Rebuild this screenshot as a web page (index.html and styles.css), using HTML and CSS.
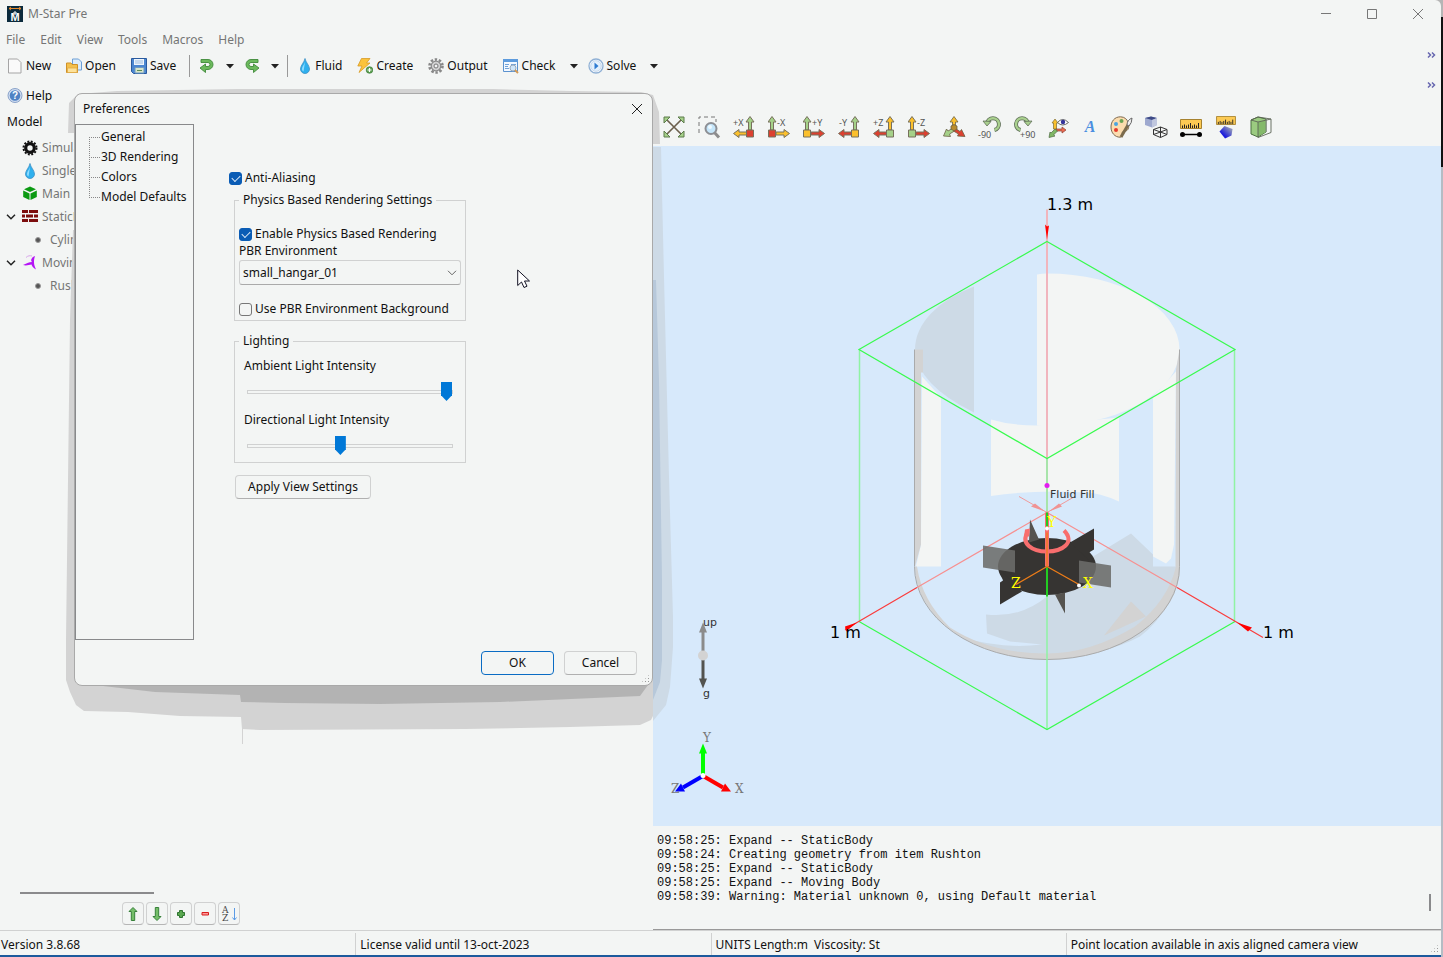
FILE: index.html
```
<!DOCTYPE html>
<html lang="en">
  <head>
    <meta charset="UTF-8">
    <meta name="viewport" content="width=device-width, initial-scale=1">
    <title>M-Star Pre</title>
    <link rel="stylesheet" href="styles.css">
  </head>
  <body>
    <!-- shared icon shapes -->
    <svg class="defs" aria-hidden="true">
      <symbol id="drop" viewBox="0 0 16 16">
        <path d="M8 .5C7.500 4 3.500 7.500 3.500 11a4.500 4.500 0 0 0 9 0C12.500 7.500 8.500 4 8 .5z" fill="#2fb0ee" stroke="#3c8fc4" stroke-width=".8" />
        <path d="M8 4c-1 3-3 4.500-3 7 0 1 .5 2 1.500 2.500z" fill="#8fdcff" />
      </symbol>
      <symbol id="caret" viewBox="0 0 8 5"><path d="M0 0h8L4 4.500z" fill="#222" /></symbol>
      <symbol id="more" viewBox="0 0 9 6"><path d="M1 .5 3.500 3 1 5.500M5 .5 7.500 3 5 5.500" fill="none" stroke="#6767b0" stroke-width="1.500" /></symbol>
      <symbol id="back" viewBox="0 0 16 16">
        <path d="M2 1.500h7a5 5 0 0 1 0 10H6.500v3L1 10l5.500-4v2.500H9a2 2 0 0 0 0-4H2z" fill="#6cb95d" stroke="#3f8a3a" stroke-width=".9" />
      </symbol>
      <symbol id="axis-left" viewBox="0 0 22 22">
        <path d="M15.500 14V6H13l4-5.500L21 6h-2.500v8z" class="up" />
        <path d="M14 16H6v-2.500L.5 17.500l5.500 4V19h8z" class="side" />
        <path d="M13.500 14h7v7h-7z" class="hub" />
      </symbol>
      <symbol id="axis-right" viewBox="0 0 22 22">
        <path d="M2.500 14V6H0l4-5.500L8 6H5.500v8z" class="up" />
        <path d="M8 16h8v-2.500l5.500 4-5.500 4V19H8z" class="side" />
        <path d="M.5 14h7v7h-7z" class="hub" />
      </symbol>
      <symbol id="turn" viewBox="0 0 22 22">
        <path d="M6 8.500a6 6 0 1 1 7.500 6.500" fill="none" stroke="#5f6f58" stroke-width="4" />
        <path d="M6 8.500a6 6 0 1 1 7.500 6.500" fill="none" stroke="#a9d08e" stroke-width="2.400" />
        <path d="m2 6 8 .5-4 4.500z" fill="#a9d08e" stroke="#5f6f58" stroke-width=".8" />
      </symbol>
      <symbol id="ruler" viewBox="0 0 22 10">
        <path d="M.5.5h21v9H.5z" fill="#fcca53" stroke="#a6822f" />
        <path d="M2.500 9V6.500m2 2.500V5.500m2 3.500V6.500m2 2.500V5.500m2 3.500V4m2 5V6.500m2 2.500V5.500m2 3.500V6.500m2 2.500V4" stroke="#222" />
      </symbol>
      <symbol id="expand" viewBox="0 0 10 6"><path d="M1 .8 5 4.800 9 .8" fill="none" stroke="#222" stroke-width="1.500" /></symbol>
      <symbol id="arrow" viewBox="0 0 16 16"><path d="M6.300 14.500V5.500H4L8 1.500l4 4H9.700v9z" fill="#74be68" stroke="#37803a" /></symbol>
    </svg>

    <div class="window">
      <header class="titlebar">
        <svg class="logo" viewBox="0 0 16 16">
          <path d="M0 0h16v16H0z" fill="#0b2a3c" />
          <path d="M2 2.500h12M4 1 2 2.500 4 4m8-3 2 1.500L12 4" fill="none" stroke="#e58a2e" />
          <path d="M8 5v4M6 7h4" stroke="#fff" />
          <text x="8" y="15" class="logo-text">M</text>
        </svg>
        <h1>M-Star Pre</h1>
        <div class="window-buttons">
          <button aria-label="Minimize"><svg viewBox="0 0 12 12"><path d="M1 5.500h10" /></svg></button>
          <button aria-label="Maximize"><svg viewBox="0 0 12 12"><path d="M1.500 1.500h9v9h-9z" /></svg></button>
          <button aria-label="Close"><svg viewBox="0 0 12 12"><path d="m1 1 10 10M11 1 1 11" /></svg></button>
        </div>
      </header>

      <nav class="menubar">
        <button>File</button>
        <button>Edit</button>
        <button>View</button>
        <button>Tools</button>
        <button>Macros</button>
        <button>Help</button>
      </nav>

      <div class="toolbar">
        <button class="tool">
          <svg viewBox="0 0 16 16"><path d="M1.500 1h9l3.500 3.500V15H1.500z" fill="#fafafa" stroke="#a5a5a5" /></svg>
          New
        </button>
        <button class="tool">
          <svg viewBox="0 0 16 16">
            <path d="M6.500 1h6l3 3v8h-9z" fill="#dcecfb" stroke="#6c9fd6" />
            <path d="M.5 5H5l1 1.500h5.500v8H.5z" fill="#f4c04c" stroke="#cf9128" />
            <path d="M1.500 10H11v4.500H1.500z" fill="#fde29a" stroke="#e0aa44" stroke-width=".8" />
          </svg>
          Open
        </button>
        <button class="tool">
          <svg viewBox="0 0 16 16">
            <path d="M.5.5h15v15h-13l-2-2z" fill="#4b87d1" stroke="#2a5a9e" />
            <path d="M3 1h10v6H3z" fill="#eef5fc" />
            <path d="M4 3h8M4 5h8" stroke="#9dbde0" />
            <path d="M4 9.500h9V15H4z" fill="#d8e5c9" stroke="#6f9ac5" />
            <path d="M6 12.500h5" stroke="#5c8b55" />
          </svg>
          Save
        </button>
        <span class="separator"></span>
        <button class="tool" aria-label="Undo"><svg><use href="#back" /></svg></button>
        <button class="drop" aria-label="Undo list"><svg><use href="#caret" /></svg></button>
        <button class="tool" aria-label="Redo"><svg class="flip"><use href="#back" /></svg></button>
        <button class="drop" aria-label="Redo list"><svg><use href="#caret" /></svg></button>
        <span class="separator"></span>
        <button class="tool tool-narrow"><svg><use href="#drop" /></svg>Fluid</button>
        <button class="tool">
          <svg viewBox="0 0 16 16">
            <path d="M4.500.5H13L9.500 5H13L2 14.500l3-6.500H.8z" fill="#fbc33b" stroke="#d79a26" stroke-width=".8" />
            <circle cx="12.500" cy="12" r="3.300" fill="#5da052" stroke="#3b7c36" stroke-width=".7" />
            <path d="M12.500 10v4m-2-2h4" stroke="#fff" stroke-width="1.200" />
          </svg>
          Create
        </button>
        <button class="tool">
          <svg viewBox="0 0 16 16">
            <circle cx="8" cy="8" r="6.500" fill="none" stroke="#888" stroke-width="2.600" stroke-dasharray="2.400 1.684" />
            <circle cx="8" cy="8" r="4.800" fill="#d2d2d2" stroke="#888" stroke-width="1.200" />
            <circle cx="8" cy="8" r="2" fill="#f3f4f4" stroke="#777" />
          </svg>
          Output
        </button>
        <button class="tool tool-menu">
          <svg viewBox="0 0 16 16">
            <path d="M.5 1.500h14v12H.5z" fill="#f2f8ff" stroke="#5b92cf" />
            <path d="M0 1h15v3H0z" fill="#5d9bdd" />
            <path d="M2 6.500h4m-4 2h3m-3 2h4m2-4h5" stroke="#71a2d8" />
            <circle cx="10" cy="10" r="3" fill="#cfe6fa" stroke="#9aaaba" />
            <path d="m12 12 3 3" stroke="#d29a56" stroke-width="2" />
          </svg>
          Check
        </button>
        <button class="drop" aria-label="Check list"><svg><use href="#caret" /></svg></button>
        <button class="tool tool-menu">
          <svg viewBox="0 0 16 16">
            <circle cx="8" cy="8" r="7" fill="#fff" stroke="#8fb0d5" stroke-width="1.300" />
            <circle cx="8" cy="8" r="5.300" fill="#e3f0fc" stroke="#c5d8ed" />
            <path d="M6.500 4.500 10.500 8l-4 3.500z" fill="#2e7bd1" />
          </svg>
          Solve
        </button>
        <button class="drop" aria-label="Solve list"><svg><use href="#caret" /></svg></button>
        <button class="more" aria-label="More tools"><svg><use href="#more" /></svg></button>
      </div>

      <div class="toolbar">
        <button class="tool">
          <svg viewBox="0 0 16 16">
            <circle cx="8" cy="7.500" r="7" fill="#cfdcf0" stroke="#8aa3c9" />
            <circle cx="8" cy="7.500" r="5.300" fill="#4f82c4" />
            <text x="8" y="11" class="help-text">?</text>
          </svg>
          Help
        </button>
        <button class="more" aria-label="More tools"><svg><use href="#more" /></svg></button>
      </div>

      <main class="main">
        <section class="model">
          <h2>Model</h2>
          <ul class="tree">
            <li>
              <svg class="tree-icon" viewBox="0 0 16 16">
                <circle cx="8" cy="8" r="6.500" fill="none" stroke="#111" stroke-width="2" stroke-dasharray="1.900 1.503" />
                <circle cx="8" cy="8" r="4.300" fill="none" stroke="#111" stroke-width="3.200" />
              </svg>Simulation
            </li>
            <li><svg class="tree-icon"><use href="#drop" /></svg>Single Fluid</li>
            <li>
              <svg class="tree-icon" viewBox="0 0 16 16">
                <path d="m8 .5 6 2.700-6 2.800-6-2.800z" fill="#0b9a12" />
                <path d="M1.200 4.500 7.500 7.500V14l-6.300-3zM14.800 4.500 8.500 7.500V14l6.300-3z" fill="#0b9a12" />
              </svg>Main
            </li>
            <li class="parent">
              <button aria-label="Collapse StaticBody"><svg><use href="#expand" /></svg></button>
              <svg class="tree-icon" viewBox="0 0 16 16">
                <path d="M0 1h6v3H0zm7 0h9v3H7zM0 5.500h3v3H0zm4 0h7v3H4zm8 0h4v3h-4zM0 10h6v3H0zm7 0h9v3H7z" fill="#7c0d0d" />
              </svg>StaticBody
            </li>
            <li class="child"><i></i>Cylinder</li>
            <li class="parent">
              <button aria-label="Collapse Moving Body"><svg><use href="#expand" /></svg></button>
              <svg class="tree-icon" viewBox="0 0 16 16">
                <path d="M10 7C8 5 10 2 13 1c-1 3-1 4-1 6.500 0 2.500 1 4.500 2 7-3-1.500-4-3.500-4.500-5C7 10 4 11 1 10 4 8.500 7 7 10 7z" fill="#b414f5" />
                <path d="M4 2.500C6 .5 8 .5 10 1" fill="none" stroke="#d7a6ea" />
              </svg>Moving Body
            </li>
            <li class="child"><i></i>Rushton</li>
          </ul>
          <div class="model-scroll"></div>
          <div class="model-buttons">
            <button aria-label="Move up"><svg><use href="#arrow" /></svg></button>
            <button aria-label="Move down"><svg class="down"><use href="#arrow" /></svg></button>
            <button aria-label="Add"><svg viewBox="0 0 16 16"><path d="M6.500 4.500h3v2h2v3h-2v2h-3v-2h-2v-3h2z" fill="#5aa850" stroke="#2f7430" /></svg></button>
            <button aria-label="Remove"><svg viewBox="0 0 16 16"><path d="M5 6.500h6.500v2.500H5z" fill="#f99" stroke="#d81e1e" /></svg></button>
            <button aria-label="Sort">
              <svg viewBox="0 0 16 16">
                <text x="1" y="7" class="sort-text">A</text>
                <text x="1" y="15" class="sort-text">Z</text>
                <path d="M13.500 2v12m-2-2.500 2 2.500 2-2.500" fill="none" stroke="#5b9be6" />
              </svg>
            </button>
          </div>
        </section>

        <section class="view">
          <div class="view-tools">
            <button aria-label="Fit view">
              <svg viewBox="0 0 22 22">
                <path d="m4 4 14 14M18 4 4 18" stroke="#6b5f4c" stroke-width="1.600" />
                <path d="M1 1h6L1 7zM21 1v6l-6-6zM1 21v-6l6 6zM21 21h-6l6-6z" fill="#a5d189" stroke="#5c7a4c" />
              </svg>
            </button>
            <button aria-label="Zoom to region">
              <svg viewBox="0 0 22 22">
                <path d="M1 17V1h17v5" fill="none" stroke="#777" stroke-dasharray="4 3" />
                <path d="m16 16 5 5.500" stroke="#8d8d8d" stroke-width="3" />
                <circle cx="13" cy="12.500" r="5.500" fill="#c5e6fa" stroke="#8d8f94" stroke-width="2" />
                <circle cx="12" cy="11" r="2" fill="#eefaff" />
              </svg>
            </button>
            <button class="axis axis-x" aria-label="Plus X"><svg viewBox="0 0 22 22"><use href="#axis-left" /><text x="0" y="10">+X</text></svg></button>
            <button class="axis axis-x" aria-label="Minus X"><svg viewBox="0 0 22 22"><use href="#axis-right" /><text x="9" y="10">-X</text></svg></button>
            <button class="axis axis-y" aria-label="Plus Y"><svg viewBox="0 0 22 22"><use href="#axis-right" /><text x="9" y="10">+Y</text></svg></button>
            <button class="axis axis-y" aria-label="Minus Y"><svg viewBox="0 0 22 22"><use href="#axis-left" /><text x="1" y="10">-Y</text></svg></button>
            <button class="axis axis-z" aria-label="Plus Z"><svg viewBox="0 0 22 22"><use href="#axis-left" /><text x="0" y="10">+Z</text></svg></button>
            <button class="axis axis-z" aria-label="Minus Z"><svg viewBox="0 0 22 22"><use href="#axis-right" /><text x="9" y="10">-Z</text></svg></button>
            <button aria-label="Isometric">
              <svg viewBox="0 0 22 22" stroke="#6b6145" stroke-width=".8">
                <path d="M9.500 11V6H7l4-5.500L15 6h-2.500v5z" fill="#fbc02d" />
                <path d="m10 12-5 3-1.500-2L.5 20l7 .5-1-2.500 5-3z" fill="#a5d189" />
                <path d="m12 12 5 3.500 1.500-2L22 20.500l-7.500-.5 1-2-5-3z" fill="#dc4030" />
                <path d="m8 10 3-1.500L14 10v3l-3 2-3-2z" fill="#b98b2c" />
              </svg>
            </button>
            <button aria-label="Rotate minus 90"><svg viewBox="0 0 22 22"><use href="#turn" x="3" y="-1" width="22" height="22" /><text x="0" y="22">-90</text></svg></button>
            <button aria-label="Rotate plus 90"><svg viewBox="0 0 22 22"><use href="#turn" class="mirror" x="1" y="-1" width="22" height="22" /><text x="7" y="22">+90</text></svg></button>
            <button aria-label="Show axes">
              <svg viewBox="0 0 22 22">
                <path d="M5.500 13V7H4l3-4 3 4H8.500v6z" fill="#fbc02d" stroke="#7c6b32" stroke-width=".7" />
                <path d="M8 13h6v-2l4 3-4 3v-2H8z" fill="#ec6a50" stroke="#8c3f30" stroke-width=".7" />
                <path d="m7 13-4 4-1-1-1 5.500 6-1.500-1.500-1 4-4z" fill="#7fb765" stroke="#4f6c42" stroke-width=".7" />
                <path d="M9.500 6.500q5-6 11 0-6 5-11 0z" fill="#fff" stroke="#666" />
                <circle cx="15" cy="6" r="2.200" fill="#34349a" />
              </svg>
            </button>
            <button class="letter" aria-label="Annotations">A</button>
            <button aria-label="Colors">
              <svg viewBox="0 0 22 22">
                <path d="M10.500.8C4.500.8 1 5.500 1 11c0 6 4 10.200 9 10.200 2.500 0 2.500-2 2.200-3.700-.2-2 1-2.500 3-2.500C21 15 20 .8 10.500.8z" fill="#fbdcae" stroke="#7e6a50" />
                <circle cx="6" cy="8" r="2" fill="#4aa5df" /><circle cx="11.500" cy="5" r="2" fill="#69a354" />
                <circle cx="6" cy="14" r="2" fill="#e5392c" />
                <path d="M18 9 11 21" stroke="#7b6b4c" stroke-width="3" />
                <path d="M17 9q0-5 5-7 0 5-3 8z" fill="#eee" stroke="#666" />
              </svg>
            </button>
            <button aria-label="Solid or wireframe">
              <svg viewBox="0 0 22 22">
                <path d="m0 2 6-1.500L12 2v7l-5 2.500L0 9z" fill="#9ea9cf" />
                <path d="m0 2 6-1.500L12 2 7 4z" fill="#3d4a86" /><path d="M7 4v7.500L12 9V2z" fill="#c0c7de" />
                <path d="m8.500 13.500 7-2.500 6.500 2.500v5l-6.500 3-7-3zl7 2.500 6.500-2.500m-6.500 2.500v5.500m0-10.500v5m-7 2.500 7-2.500 6.500 2.500" fill="none" stroke="#333" />
              </svg>
            </button>
            <button aria-label="Measure distance">
              <svg viewBox="0 0 22 22"><use href="#ruler" y="3" width="22" height="10" /><path d="M3 18.500h16" stroke="#000" stroke-width="1.500" /><circle cx="2.500" cy="18.500" r="2.500" /><circle cx="19.500" cy="18.500" r="2.500" /></svg>
            </button>
            <button aria-label="Measure geometry">
              <svg viewBox="0 0 22 22">
                <defs><linearGradient id="gem" x1="1" y1="0" x2="0" y2="1"><stop offset=".2" stop-color="#8c93bb" /><stop offset=".7" stop-color="#1c1cdc" /></linearGradient></defs>
                <use href="#ruler" width="22" height="9" /><path d="m9.500 10 8 3-1 6.500-6.500 3-5.500-7z" fill="url(#gem)" />
              </svg>
            </button>
            <button aria-label="Clip">
              <svg viewBox="0 0 22 22">
                <path d="m1 4 7-3 8 2v13l-8 5-7-3z" fill="#9bcb80" stroke="#4b7040" />
                <path d="M8 6.500 16 4v12l-8 4.500z" fill="#84b96a" />
                <path d="m1 4 7-3 13 2v13.500L8 21.500V6zm7 2 13-3" fill="none" stroke="#5c6455" stroke-width=".9" />
                <path d="M16 3v13" stroke="#777" stroke-width=".7" />
              </svg>
            </button>
          </div>

          <svg class="scene" viewBox="653 147 788 679" role="img" aria-label="Mixing tank">
            <!-- tank -->
            <path d="M974 287A132.500 76 0 0 0 915 350q2 35 59 63z" fill="#cddae6" />
            <g fill="#f3f5f4">
              <path d="M1037 275q5-1 10-1a132.500 76 0 0 1 132.500 76A132.500 76 0 0 1 1037 426z" />
              <path d="M991 420q20 6 46 6l82-8v84q-20-9-34-9-50-3-94 3.500z" />
              <path d="m922 377 19 21v169h-25l5-22z" />
              <path d="m1153 397 23-25-2 173-3 14-5 5-13-7z" />
            </g>
            <path d="m1131 534 22 21v12h25q-3 43-38 70-40 21-93 20-47-2-87-20 40 13 82 8l-32-3-23-8-1-19q34 4 61-18l33-32z" fill="#cddae6" />
            <path d="M915 350h8v23h-2v172l-6 22zM1176 370l3.500-20v217h-4zM915 567a132.500 93 0 0 0 265 0h-4q-8 34-41 60-45 27-88 27-57 0-97-26-28-27-33-61z" fill="#d3d3d3" />
            <path d="m1131 602 15 15-42 19z" fill="#d3d3d3" />
            <path d="M914.500 350v217a132.500 93 0 0 0 265 0V350" fill="none" stroke="#a9aaab" />

            <!-- bounding box and axes -->
            <g fill="none">
              <path d="M1047 210v303" stroke="#f1b5bd" stroke-width="2" />
              <path d="M859.500 350v272M1234.500 350v272M1047 459v271" stroke="#8ff3a4" stroke-width="1.500" />
              <path d="m1047 242 188 108-188 109-188-109zM859 622l188 108 188-108" stroke="#38fb4d" stroke-width="1.200" />
              <path d="m1047 513-130 75M1047 513l130 75" stroke="#f79090" stroke-width="1.200" />
              <path d="m917 588-72 42M1177 588l86 50" stroke="#fa3c3c" stroke-width="1.200" />
              <path d="m1019 497 28 16 26-15" stroke="#f09a9a" />
            </g>
            <path d="m1045 225 2 2 2-1-2 14zM857 623l-12 4 1 5zM1237 623l15 5-4 4z" fill="#f00" />
            <path d="m1045 512-14-5 4-3zM1049 512l10-8 3 3z" fill="#f09393" />

            <!-- impeller -->
            <g fill="#363432">
              <ellipse cx="1047" cy="567" rx="49" ry="28.500" />
              <path d="m1070 543 24-14v21l-5 3 7 14zM1000 605v-22l3-2-4-12 23 23z" />
            </g>
            <path d="m983 546 32 5v22l-32-5zM1079 561l32 5v22l-32-5z" fill="#6c6c6a" fill-opacity=".88" />
            <path d="m1030 520 9 20-10 3zM1055 595l10-2v21z" fill="#55534f" />
            <path d="M1028 532c-8 12 4 20 19 20s29-9 17-21" fill="none" stroke="#f86e6e" stroke-width="4" />
            <path d="m1024 537 1-7 5-1-1 8z" fill="#f86e6e" />
            <path d="M1047 513v54" stroke="#f86e6e" stroke-width="4" />
            <path d="M1047 513v14M1047 568v29" stroke="#22cc22" stroke-width="2" />
            <path d="m1047 567-31 18M1047 567l32 18M1047 533v34" fill="none" stroke="#ee7d18" stroke-width="1.300" />
            <circle cx="1047" cy="529" r="2" fill="#fff" /><circle cx="1079" cy="586" r="2" fill="#fff" />
            <circle cx="1047" cy="486" r="2.500" fill="#e31ef0" />
            <g class="axis-name">
              <text x="1047" y="527">Y</text>
              <text x="1011" y="588">Z</text>
              <text x="1083" y="588">X</text>
            </g>
            <g class="size-name">
              <text x="1047" y="210">1.3 m</text>
              <text x="830" y="638">1 m</text>
              <text x="1263" y="638">1 m</text>
            </g>
            <text x="1050" y="498" class="fill-name">Fluid Fill</text>

            <!-- gravity -->
            <path d="M703 655v-24" stroke="#8b8b8b" stroke-width="3" /><path d="M699 633h8l-4-10z" fill="#8b8b8b" />
            <path d="M703 660v20" stroke="#53534f" stroke-width="3" /><path d="M699 679h8l-4 10z" fill="#53534f" />
            <circle cx="703" cy="656" r="5" fill="#d3d3d3" />
            <text x="703" y="626" class="fill-name">up</text>
            <text x="703" y="697" class="fill-name">g</text>

            <!-- orientation -->
            <path d="M703 775v-22" stroke="#0f0" stroke-width="4" /><path d="M699 754h8l-4-10z" fill="#0f0" />
            <path d="m704 777 19 11" stroke="#f00" stroke-width="4" /><path d="m721 792 4-8 6 8z" fill="#f00" />
            <path d="m702 777-19 11" stroke="#00f" stroke-width="4" /><path d="m685 792-4-8-6 8z" fill="#00f" />
            <circle cx="703" cy="776" r="2.500" fill="#fff" />
            <g class="triad-name">
              <text x="703" y="742">Y</text>
              <text x="735" y="793">X</text>
              <text x="671" y="793">Z</text>
            </g>
          </svg>

          <div class="log">
            <p>09:58:25: Expand -- StaticBody</p>
            <p>09:58:24: Creating geometry from item Rushton</p>
            <p>09:58:25: Expand -- StaticBody</p>
            <p>09:58:25: Expand -- Moving Body</p>
            <p>09:58:39: Warning: Material unknown 0, using Default material</p>
            <span class="log-scroll"></span>
          </div>
        </section>
      </main>

      <footer class="status">
        <span>Version 3.8.68</span>
        <span>License valid until 13-oct-2023</span>
        <span>UNITS Length:m&nbsp; Viscosity: St</span>
        <span>Point location available in axis aligned camera view</span>
        <i class="grip"></i>
      </footer>
    </div>

    <svg class="shadow" viewBox="0 0 620 670" aria-hidden="true">
      <!-- starts at 60,80 on the desktop -->
      <g fill="#d3d3d3">
        <path d="m8 53 1-30 9-9 39-3 120-2h256l78 2 70 1 12 3 6 17 1 32h-18V20H14v33zM13 150l-3 90-2 160-2 160v40l4 12 6 13 8 6 44 1 52 4 61 1 1 12 18 1 205-1 105-2 70-2 11-5 2-4v-40H14V150z" />
        <path d="M182 630h1v34h-1z" />
      </g>
      <path d="M593 67h8l3 130 5 200 4 140v30l-3 40-4 18-13 16z" fill="#cddae6" />
      <path d="M593 200h3l3 100 3 200v80l-2 22-7 18z" fill="#b7c8da" />
      <path d="m43 606 52 6 85 3 1 7 44 1 95 1 120-2 140-6 8-11z" fill="#b3b3b3" />
    </svg>

    <section class="dialog" role="dialog" aria-labelledby="dialog-title">
      <header>
        <h2 id="dialog-title">Preferences</h2>
        <button aria-label="Close preferences"><svg viewBox="0 0 12 12"><path d="m1 1 10 10M11 1 1 11" /></svg></button>
      </header>
      <div class="dialog-body">
        <ul class="pages">
          <li>General</li>
          <li>3D Rendering</li>
          <li>Colors</li>
          <li>Model Defaults</li>
        </ul>
        <form class="settings">
          <label class="check"><input type="checkbox" checked>Anti-Aliasing</label>
          <fieldset class="pbr">
            <legend>Physics Based Rendering Settings</legend>
            <label class="check"><input type="checkbox" checked>Enable Physics Based Rendering</label>
            <label for="environment">PBR Environment</label>
            <div class="select">
              <select id="environment"><option>small_hangar_01</option></select>
              <svg viewBox="0 0 10 6"><path d="M1 .8 5 4.800 9 .8" fill="none" stroke="#666" /></svg>
            </div>
            <label class="check"><input type="checkbox">Use PBR Environment Background</label>
          </fieldset>
          <fieldset class="lighting">
            <legend>Lighting</legend>
            <label for="ambient">Ambient Light Intensity</label>
            <input type="range" id="ambient" value="100">
            <label for="directional">Directional Light Intensity</label>
            <input type="range" id="directional" value="45">
          </fieldset>
          <button type="button" class="button apply">Apply View Settings</button>
        </form>
      </div>
      <footer>
        <button class="button default">OK</button>
        <button class="button">Cancel</button>
      </footer>
      <i class="grip"></i>
    </section>

    <svg class="pointer" viewBox="0 0 13 20" aria-hidden="true"><path d="M.7 1v15.500L4.500 13l2.500 5.500 3-1.300L7.500 12h5z" fill="#fff" stroke="#112" /></svg>
  </body>
</html>
```
FILE: styles.css
```
:root {
  --face: #f3f5f4;
  --line: #d0d1d1;
  --text: #111;
  --muted: #757575;
  --sky: #d7e9fb;
  --green: #a5d189;
  --yellow: #fbc02d;
  --red: #dc4030;
}

* {
  box-sizing: border-box;
}
body {
  background: linear-gradient(#b5b5b5 17px, #111 17px, #111 167px, #b5bcc4 167px);
  color: var(--text);
  font: 12px/16px "Noto Sans", "Open Sans", sans-serif;
  height: 100vh;
  margin: 0;
  overflow: hidden;
  position: relative;
}
h1, h2 {
  font-size: inherit;
  font-weight: normal;
  margin: 0;
}
p, ul, form {
  margin: 0;
  padding: 0;
}
ul {
  list-style: none;
}
button {
  align-items: center;
  background: none;
  border: 0;
  color: inherit;
  display: flex;
  font: inherit;
  justify-content: center;
  padding: 0;
}
svg {
  display: block;
  flex: none;
}
.defs {
  height: 0;
  position: absolute;
  width: 0;
}

.window {
  background: var(--face);
  border-bottom: 2px solid #1c5a9c;
  border-radius: 0 6px 0 0;
  display: flex;
  flex-direction: column;
  height: 100%;
  margin-right: 2px;
}

/* title and menu */
.titlebar {
  align-items: center;
  color: var(--muted);
  display: flex;
  gap: 5px;
  height: 27px;
  padding-left: 7px;
}
.logo {
  height: 16px;
  overflow: visible;
  width: 16px;
}
.logo-text {
  fill: #fff;
  font: bold 11px "Liberation Sans", sans-serif;
  text-anchor: middle;
}
.window-buttons {
  display: flex;
  margin-left: auto;
}
.window-buttons button {
  height: 26px;
  width: 46px;
}
.window-buttons svg {
  fill: none;
  height: 12px;
  stroke: #777;
  width: 12px;
}
.menubar {
  align-items: center;
  color: var(--muted);
  display: flex;
  gap: 15px;
  height: 25px;
  padding-left: 6px;
}

/* toolbars */
.toolbar {
  align-items: center;
  display: flex;
  height: 28px;
}
.toolbar + .toolbar {
  height: 31px;
}
.tool {
  gap: 3px;
  height: 24px;
  padding: 0 8px 0 7px;
}
.tool-narrow {
  gap: 2px;
}
.tool-menu {
  padding-right: 11px;
}
.tool svg {
  height: 16px;
  width: 16px;
}
.tool .flip {
  transform: scaleX(-1);
}
.drop {
  height: 24px;
  padding: 0 3px;
}
.drop svg {
  height: 5px;
  width: 8px;
}
.separator {
  background: #999;
  height: 22px;
  margin: 0 2px 0 5px;
  width: 1px;
}
.more {
  align-self: flex-start;
  margin-left: auto;
  margin-right: 5px;
}
.more svg {
  height: 6px;
  width: 9px;
}
.toolbar + .toolbar .more {
  padding-top: 2px;
}
.help-text {
  fill: #fff;
  font: bold 10px "Liberation Sans", sans-serif;
  text-anchor: middle;
}

/* panels */
.main {
  display: grid;
  flex: 1;
  grid-template-columns: 653fr 788fr;
  min-height: 0;
}
.model {
  display: flex;
  flex-direction: column;
}
.model h2 {
  line-height: 22px;
  padding: 0 7px 3px;
}
.tree {
  color: var(--muted);
  flex: 1;
}
.tree li {
  align-items: center;
  display: flex;
  gap: 4px;
  height: 23px;
  padding-left: 22px;
}
.tree .parent {
  padding-left: 6px;
}
.tree .parent button {
  height: 16px;
  margin-right: 2px;
  width: 10px;
}
.tree .parent button svg {
  height: 6px;
  width: 10px;
}
.tree .child {
  gap: 9px;
  padding-left: 35px;
}
.tree i {
  background: #555;
  border: 1px solid #999;
  border-radius: 50%;
  height: 6px;
  width: 6px;
}
.tree-icon {
  height: 16px;
  width: 16px;
}
.model-scroll {
  background: #8a8a8c;
  height: 2px;
  margin: 0 20px 8px;
  width: 134px;
}
.model-buttons {
  display: flex;
  gap: 2px;
  padding: 0 122px 5px;
}
.model-buttons button {
  border: 1px solid var(--line);
  border-bottom-color: #b5b5b5;
  border-radius: 4px;
  height: 23px;
  width: 22px;
}
.model-buttons svg {
  height: 16px;
  overflow: visible;
  width: 16px;
}
.down {
  transform: scaleY(-1);
}
.sort-text {
  fill: #444;
  font: 9px "DejaVu Serif", serif;
}

.view {
  display: flex;
  flex-direction: column;
  min-height: 0;
}
.view-tools {
  display: flex;
  gap: 13px;
  padding: 5px 10px 8px;
}
.view-tools button {
  height: 22px;
  width: 22px;
}
.view-tools svg {
  height: 22px;
  overflow: visible;
  width: 22px;
}
.view-tools text {
  fill: #555;
  font-size: 9px;
}
.view-tools .letter {
  color: #4a8fe0;
  font: italic bold 16px "Liberation Serif", serif;
  width: 14px;
}
.mirror {
  transform: translateX(22px) scaleX(-1);
}
.axis {
  stroke: #77705c;
  stroke-width: 1px;
}
.axis text {
  stroke: none;
}
.up { fill: var(--up); }
.side { fill: var(--side); }
.hub { fill: var(--hub); }
.axis-x {
  --up: var(--green);
  --side: var(--yellow);
  --hub: var(--red);
}
.axis-y {
  --up: var(--green);
  --side: var(--red);
  --hub: var(--yellow);
}
.axis-z {
  --up: var(--yellow);
  --side: var(--red);
  --hub: var(--green);
}

.scene {
  background: var(--sky);
  flex: 1;
  min-height: 0;
  width: 100%;
}
.axis-name {
  fill: #ff0;
  font: 14px "DejaVu Serif", serif;
}
.size-name {
  font: 16px "DejaVu Sans", sans-serif;
}
.fill-name {
  fill: #333;
  font: 11px "DejaVu Sans", sans-serif;
}
.triad-name {
  fill: #777;
  font: 12px "DejaVu Serif", serif;
}

.log {
  border-bottom: 1px solid #999;
  font: 12px/14px "Liberation Mono", monospace;
  height: 104px;
  padding: 8px 4px;
  position: relative;
}
.log-scroll {
  background: #8a8a8c;
  bottom: 18px;
  height: 17px;
  position: absolute;
  right: 10px;
  width: 2px;
}

.status {
  border-top: 1px solid var(--line);
  display: grid;
  grid-template-columns: repeat(4, 1fr);
  height: 25px;
  padding: 2px 20px 0 0;
  position: relative;
}
.status span {
  padding: 4px 0 2px 4px;
}
.status span:first-child {
  padding-left: 1px;
}
.status span + span {
  border-left: 1px solid var(--line);
}
.grip {
  background: radial-gradient(circle, #999 1px, transparent 1px) 0 0 / 3px 3px;
  bottom: 2px;
  clip-path: polygon(100% 0, 100% 100%, 0 100%);
  height: 9px;
  position: absolute;
  right: 2px;
  width: 9px;
}

/* preferences */
.shadow {
  height: 670px;
  left: 60px;
  position: absolute;
  top: 80px;
  width: 620px;
}
.dialog {
  background: var(--face);
  border: 1px solid #a9a9a9;
  border-radius: 8px;
  left: 74px;
  position: absolute;
  top: 93px;
  width: 579px;
}
.dialog header {
  align-items: center;
  display: flex;
  height: 30px;
  justify-content: space-between;
  padding: 0 9px 0 8px;
}
.dialog header svg {
  height: 12px;
  stroke: #222;
  width: 12px;
}
.dialog-body {
  display: flex;
}
.pages {
  border: 1px solid #88898b;
  min-height: 516px;
  padding: 2px 0 0 13px;
  width: 119px;
}
.pages li {
  display: flex;
  height: 20px;
  line-height: 20px;
  white-space: nowrap;
}
.pages li::before {
  border-bottom: 1px dotted #888;
  border-left: 1px dotted #888;
  content: "";
  height: 20px;
  margin: -10px 1px 0 0;
  width: 10px;
}
.pages li:first-child::before {
  border-left-color: transparent;
}
.settings {
  display: flex;
  flex-direction: column;
  padding: 46px 0 0 35px;
}
.check {
  align-items: center;
  display: flex;
  gap: 3px;
}
input[type="checkbox"] {
  appearance: none;
  border: 1px solid #777;
  border-radius: 3px;
  display: grid;
  height: 13px;
  margin: 0;
  place-content: center;
  width: 13px;
}
input[type="checkbox"]:checked {
  background: #0a5cb5;
  border-color: #0a5cb5;
}
input[type="checkbox"]:checked::before {
  border: solid #dbe9f7;
  border-width: 0 0 1px 1px;
  content: "";
  height: 4px;
  margin-bottom: 2px;
  transform: rotate(-45deg);
  width: 7px;
}
fieldset {
  border: 1px solid var(--line);
  display: flex;
  flex-direction: column;
  margin: 6px 0 0 5px;
  min-width: 0;
  width: 232px;
}
legend {
  padding: 0 4px;
}
.pbr {
  gap: 1px;
  padding: 18px 4px 3px;
}
.select {
  display: grid;
  margin-bottom: 15px;
}
.select > * {
  grid-area: 1 / 1;
}
.select select {
  appearance: none;
  background: var(--face);
  border: 1px solid var(--line);
  border-bottom-color: #aaa;
  border-radius: 3px;
  color: inherit;
  font: inherit;
  height: 25px;
  padding: 0 3px;
}
.select svg {
  align-self: center;
  height: 6px;
  justify-self: end;
  margin-right: 4px;
  pointer-events: none;
  width: 10px;
}
.lighting {
  margin-top: 12px;
  padding: 9px 4px 6px;
}
.lighting label {
  padding-left: 5px;
}
input[type="range"] {
  appearance: none;
  background: none;
  height: 20px;
  margin: 8px 8px 10px;
}
input[type="range"]:last-child {
  margin-bottom: 0;
}
input[type="range"]::-webkit-slider-runnable-track {
  border: 1px solid var(--line);
  height: 4px;
}
input[type="range"]::-webkit-slider-thumb {
  appearance: none;
  background: #0078d7;
  clip-path: polygon(0 0, 100% 0, 100% 70%, 50% 100%, 0 70%);
  height: 19px;
  margin-top: -9px;
  width: 11px;
}
.button {
  border: 1px solid var(--line);
  border-bottom-color: #b0b0b0;
  border-radius: 4px;
  height: 24px;
}
.apply {
  align-self: flex-start;
  margin: 12px 0 0 6px;
  width: 136px;
}
.dialog footer {
  display: flex;
  gap: 10px;
  justify-content: flex-end;
  padding: 11px 15px 10px;
}
.dialog footer .button {
  width: 73px;
}
.dialog footer .default {
  border-color: #0a6cc4;
}

.pointer {
  height: 20px;
  left: 517px;
  position: absolute;
  top: 269px;
  width: 13px;
}
```
